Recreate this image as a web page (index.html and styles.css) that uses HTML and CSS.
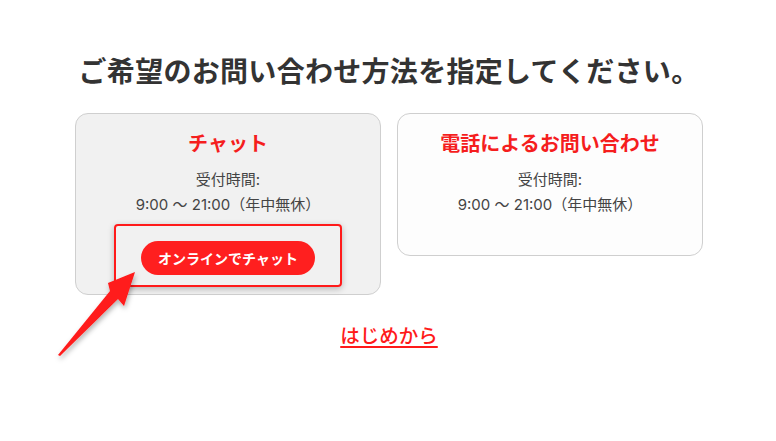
FILE: index.html
```html
<!DOCTYPE html>
<html lang="ja">
<head>
<meta charset="utf-8">
<link rel="stylesheet" href="styles.css">
</head>
<body>
<main class="page">
  <h1 class="title">ご希望のお問い合わせ方法を指定してください。</h1>
  <div class="cards">
    <section class="card card-chat">
      <h2 class="card-title">チャット</h2>
      <p class="line">受付時間:</p>
      <p class="line">9:00 ～ 21:00（年中無休）</p>
      <div class="highlight">
        <a class="btn">オンラインでチャット</a>
      </div>
    </section>
    <section class="card card-phone">
      <h2 class="card-title">電話によるお問い合わせ</h2>
      <p class="line">受付時間:</p>
      <p class="line">9:00 ～ 21:00（年中無休）</p>
    </section>
  </div>
  <a class="restart">はじめから</a>
  <svg class="arrow" width="120" height="120" viewBox="0 0 120 120">
    <defs>
      <filter id="sh" x="-30%" y="-30%" width="160%" height="160%">
        <feDropShadow dx="1" dy="3" stdDeviation="2.5" flood-color="#000" flood-opacity="0.3"/>
      </filter>
    </defs>
    <polygon filter="url(#sh)" fill="#ff1a1a" points="95,14 84,48 78,41 20,98 18,97 70,33 68,25"/>
  </svg>
</main>
</body>
</html>
```
FILE: styles.css
```css
html, body {
  margin: 0;
  padding: 0;
  background: #ffffff;
}
body {
  font-family: "Noto Sans CJK JP", sans-serif;
  color: #333;
}
.page {
  position: relative;
  width: 776px;
  height: 441px;
  padding-top: 51px;
  padding-left: 2px;
  box-sizing: border-box;
  display: flex;
  flex-direction: column;
  align-items: center;
}
.title {
  margin: 0;
  font-size: 28px;
  line-height: 38px;
  font-weight: 700;
  letter-spacing: 0.3px;
  color: #333;
}
.cards {
  margin-top: 24px;
  display: flex;
  gap: 16px;
  align-items: flex-start;
}
.card {
  width: 306px;
  box-sizing: border-box;
  border: 1px solid #cfcfcf;
  border-radius: 13px;
  padding: 15px 0 0;
  display: flex;
  flex-direction: column;
  align-items: center;
}
.card-chat {
  background: #f1f1f1;
  padding-bottom: 7px;
}
.card-phone {
  background: #fdfdfd;
  padding-bottom: 38px;
}
.card-title {
  margin: 0 0 10px;
  font-size: 20px;
  line-height: 28px;
  font-weight: 700;
  color: #f51e1e;
}
.line {
  margin: 0;
  font-family: Inter, "Noto Sans CJK JP", sans-serif;
  font-size: 15px;
  line-height: 25px;
  color: #444;
}
.highlight {
  margin-top: 7px;
  width: 228px;
  height: 63px;
  box-sizing: border-box;
  border: 2px solid #ff1a1a;
  border-radius: 4px;
  box-shadow: 0 2px 6px rgba(0,0,0,0.25);
  display: flex;
  justify-content: center;
  padding-top: 15px;
}
.btn {
  width: 174px;
  height: 34px;
  border-radius: 17px;
  background: #ff1f1f;
  color: #fff;
  font-size: 14px;
  font-weight: 700;
  line-height: 34px;
  text-align: center;
}
.restart {
  margin-top: 26px;
  font-size: 19.5px;
  line-height: 28px;
  font-weight: 500;
  color: #ff1a1a;
  text-decoration: underline;
  text-decoration-thickness: 2px;
  text-underline-offset: 3px;
}
.arrow {
  position: absolute;
  left: 40px;
  top: 258px;
}
```
